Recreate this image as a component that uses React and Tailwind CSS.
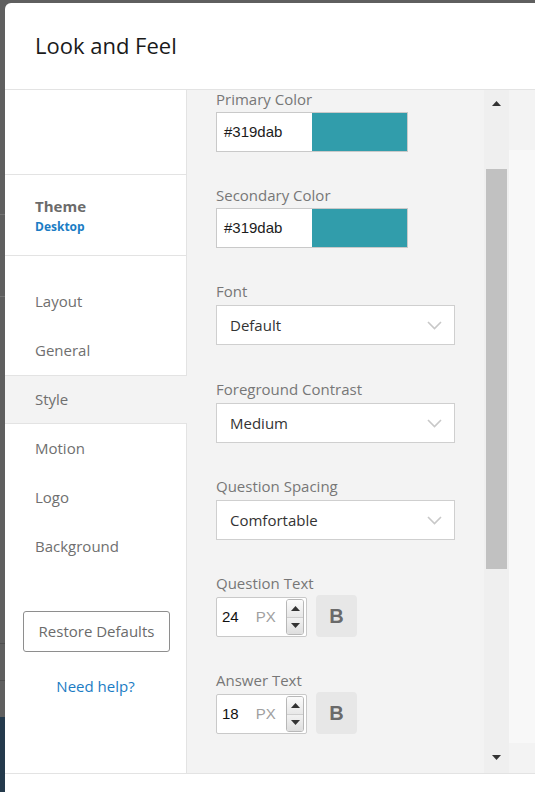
import React from "react";

const Chevron = () => (
  <svg width="15" height="9" viewBox="0 0 15 9" fill="none">
    <path d="M1 1l6.5 6.5L14 1" stroke="#c8c8c8" strokeWidth="1.6" />
  </svg>
);

const Tri = ({ down }) => (
  <svg width="9" height="5" viewBox="0 0 9 5">
    <path d={down ? "M0 0h9L4.5 5z" : "M0 5h9L4.5 0z"} fill="#333" />
  </svg>
);

const ColorField = ({ label, value }) => (
  <div className="mb-[34px]">
    <div className="mb-[4px] text-[15px] leading-[18px] text-[#777]">{label}</div>
    <div className="flex h-[40px] w-[192px] border border-[#c9c9c9]">
      <div className="flex w-[95px] items-center bg-white pl-[7px] font-['Liberation_Sans',sans-serif] text-[15px] text-[#1c1c1c]">
        {value}
      </div>
      <div className="flex-1 bg-[#319dab]" />
    </div>
  </div>
);

const SelectField = ({ label, value, extra }) => (
  <div className={extra ? "mb-[35px]" : "mb-[34px]"}>
    <div className="mb-[5px] text-[15px] leading-[18px] text-[#777]">{label}</div>
    <div className="flex h-[40px] w-[239px] items-center justify-between border border-[#cfcfcf] bg-white pl-[13px] pr-[12px]">
      <span className="text-[15px] text-[#333]">{value}</span>
      <Chevron />
    </div>
  </div>
);

const SizeField = ({ label, value }) => (
  <div className="mb-[34px]">
    <div className="mb-[3px] text-[15px] leading-[18px] text-[#777]">{label}</div>
    <div className="flex h-[42px] items-end">
      <div className="flex h-[40px] w-[91px] items-center rounded-[2px] border border-[#c9c9c9] bg-white pl-[5px] font-['Liberation_Sans',sans-serif] text-[15px]">
        <span className="text-[#111]">{value}</span>
        <span className="ml-[17px] text-[#a0a0a0]">PX</span>
        <div className="ml-auto mr-[2px] flex h-[36px] w-[18px] flex-col overflow-hidden rounded-[3px] border border-[#b8b8b8]">
          <div className="flex flex-1 items-center justify-center border-b border-[#cfcfcf] bg-linear-to-b from-[#fbfbfb] to-[#e8e8e8]">
            <Tri />
          </div>
          <div className="flex flex-1 items-center justify-center bg-linear-to-b from-[#f2f2f2] to-[#dedede]">
            <Tri down />
          </div>
        </div>
      </div>
      <div className="ml-[9px] flex h-[42px] w-[41px] items-center justify-center rounded-[4px] bg-[#e7e7e7] font-['Liberation_Sans',sans-serif] text-[20px] font-bold text-[#6a6a6a]">
        B
      </div>
    </div>
  </div>
);

const navItems = ["Layout", "General", "Style", "Motion", "Logo", "Background"];

export default function App() {
  return (
    <div className="flex h-[792px] w-[535px] flex-col overflow-hidden bg-[#5f5f5f] font-['Open_Sans',sans-serif]">
      <div className="h-[3px] shrink-0" />
      <div className="flex flex-1">
        {/* dimmed page behind the modal */}
        <div className="flex w-[5px] shrink-0 flex-col">
          <div className="h-[211px]" />
          <div className="h-px bg-[#747474]" />
          <div className="h-[81px]" />
          <div className="h-px bg-[#747474]" />
          <div className="h-[346px]" />
          <div className="h-px bg-[#4f4f4f]" />
          <div className="h-[36px]" />
          <div className="h-px bg-[#4f4f4f]" />
          <div className="h-[36px]" />
          <div className="flex-1 bg-[#243a4c]" />
        </div>

        <div className="flex flex-1 flex-col rounded-tl-[6px] bg-white">
          <div className="h-[87px] shrink-0 border-b border-[#e3e3e3] pl-[30px] pt-[27px]">
            <h1 className="text-[22px] leading-[30px] text-[#1a1a1a]">Look and Feel</h1>
          </div>

          <div className="flex h-[683px] shrink-0">
            <aside className="flex w-[182px] shrink-0 flex-col bg-white">
              <div className="h-[85px] border-b border-r border-[#e3e3e3]" />
              <div className="h-[81px] border-b border-r border-[#e3e3e3] pl-[30px] pt-[22px]">
                <div className="text-[15px] font-bold leading-[18px] text-[#6b6b6b]">Theme</div>
                <div className="mt-[5px] text-[12px] font-bold leading-[14px] text-[#1b7cc4]">Desktop</div>
              </div>
              <div className="h-[21px] border-r border-[#e3e3e3]" />
              {navItems.map((item) =>
                item === "Style" ? (
                  <div
                    key={item}
                    className="flex h-[49px] items-center border-y border-[#e3e3e3] bg-[#f3f3f3] pl-[30px] text-[15px] text-[#6f6f6f]"
                  >
                    {item}
                  </div>
                ) : (
                  <div
                    key={item}
                    className="flex h-[49px] items-center border-r border-[#e3e3e3] pl-[30px] text-[15px] text-[#6f6f6f]"
                  >
                    {item}
                  </div>
                )
              )}
              <div className="flex flex-1 flex-col border-r border-[#e3e3e3] pt-[40px]">
                <button className="ml-[18px] h-[41px] w-[147px] rounded-[3px] border border-[#8e8e8e] text-[15px] text-[#6b6b6b]">
                  Restore Defaults
                </button>
                <a className="mt-[24px] text-center text-[15px] leading-[20px] text-[#1b7cc4]">Need help?</a>
              </div>
            </aside>

            <main className="w-[297px] shrink-0 overflow-hidden bg-[#f3f3f3] pl-[29px]">
              <ColorField label="Primary Color" value="#319dab" />
              <ColorField label="Secondary Color" value="#319dab" />
              <SelectField label="Font" value="Default" extra />
              <SelectField label="Foreground Contrast" value="Medium" />
              <SelectField label="Question Spacing" value="Comfortable" />
              <SizeField label="Question Text" value="24" />
              <SizeField label="Answer Text" value="18" />
            </main>

            <div className="flex w-[25px] shrink-0 flex-col items-center bg-[#efefef]">
              <div className="mt-[11px]">
                <Tri />
              </div>
              <div className="mt-[63px] h-[400px] w-[21px] bg-[#c1c1c1]" />
              <div className="flex-1" />
              <div className="mb-[13px]">
                <Tri down />
              </div>
            </div>

            <div className="flex-1 bg-[#f3f3f3] pt-[60px]">
              <div className="h-[593px] bg-[#f8f8f8]" />
            </div>
          </div>

          <div className="flex-1 border-t border-[#e3e3e3] bg-white" />
        </div>
      </div>
    </div>
  );
}
